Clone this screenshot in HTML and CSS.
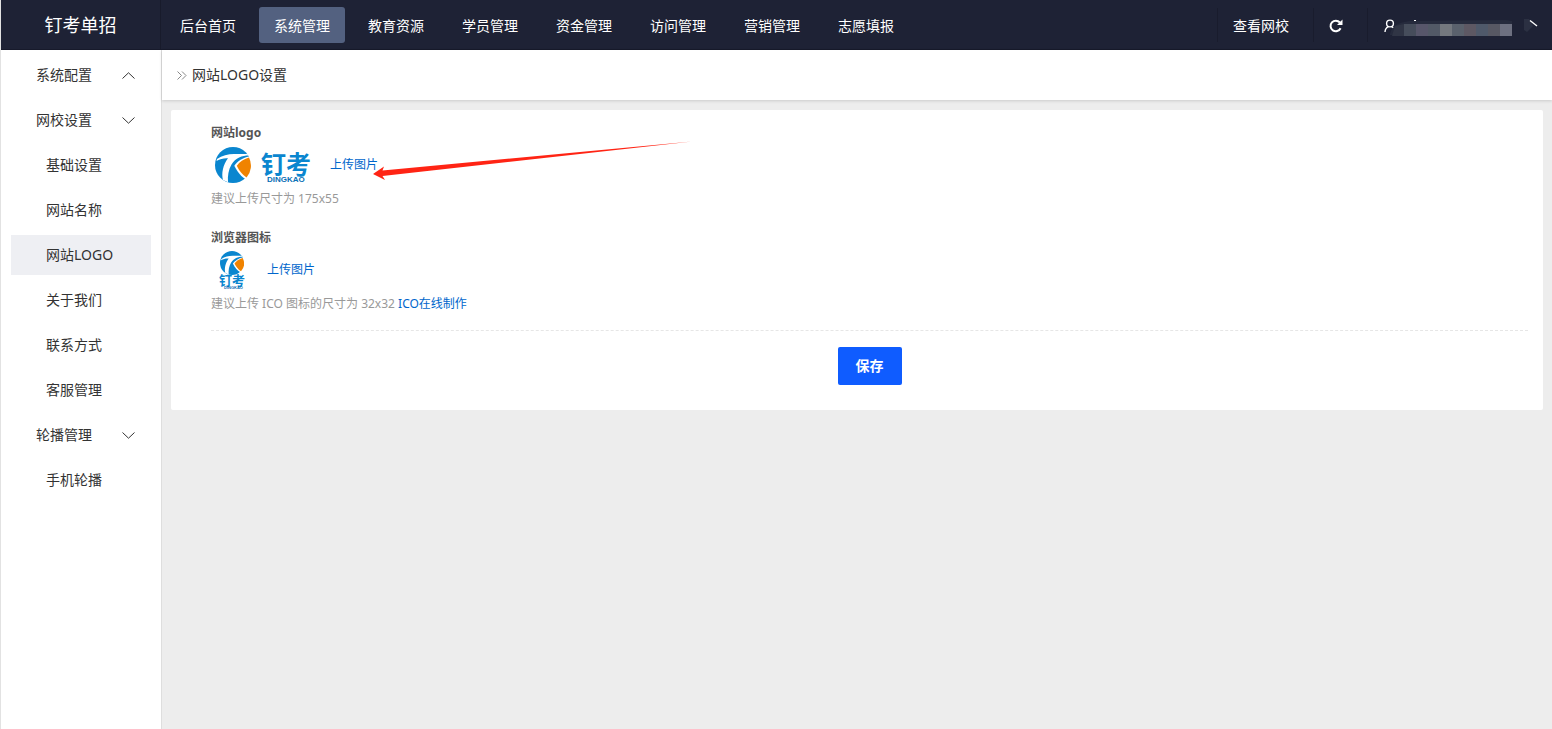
FILE: index.html
```html
<!DOCTYPE html>
<html lang="zh-CN">
<head>
<meta charset="utf-8">
<meta name="viewport" content="width=device-width, initial-scale=1">
<title>网站LOGO设置</title>
<link rel="stylesheet" href="styles.css">
</head>
<body>
<svg width="0" height="0" class="defs" aria-hidden="true">
  <symbol id="mark" viewBox="0 0 36 36">
    <circle cx="18" cy="18" r="18" fill="#0a86cf"/>
    <path d="M2 12C7 8.500 13 7 19 7H32.500L34 8.600C27 8.600 20.500 11 16.500 17.500C13.500 22.500 12.500 29 13 35.300L8 33C6.200 26.500 8 18 13 11.300C9 11 5.500 11.800 1.500 14Z" fill="#fff"/>
    <path d="M34 9.600C28 10.800 22.500 14 19.300 18.800C22 24.500 26 29.500 30.500 32L36 30V9.600Z" fill="#fff"/>
    <path d="M34 10.500C28.500 12 24.500 15 21.800 18.800C24 23.500 27 27.500 31.500 30.500A18 18 0 0 0 34 10.500Z" fill="#f08300"/>
  </symbol>
  <symbol id="chevron" viewBox="0 0 13 7">
    <path d="M0.500 0.500L6.500 6.200L12.500 0.500" fill="none" stroke="currentColor"/>
  </symbol>
</svg>

<header class="topbar">
  <a class="brand" href="#">钉考单招</a>
  <nav class="menu">
    <a href="#">后台首页</a>
    <a class="active" href="#">系统管理</a>
    <a href="#">教育资源</a>
    <a href="#">学员管理</a>
    <a href="#">资金管理</a>
    <a href="#">访问管理</a>
    <a href="#">营销管理</a>
    <a href="#">志愿填报</a>
  </nav>
  <div class="tools">
    <a class="tool" href="#">查看网校</a>
    <button class="tool refresh" type="button" aria-label="刷新">
      <svg width="14" height="14" viewBox="0 0 14 14"><path d="M11.600 9.300A5.300 5.300 0 1 1 10.900 3.500" fill="none" stroke="#fff" stroke-width="2"/><path d="M13.500 0.500V6H8Z" fill="#fff"/></svg>
    </button>
    <button class="tool account" type="button" aria-label="账户">
      <svg width="12" height="14" viewBox="0 0 12 14"><circle cx="6" cy="4.500" r="3.400" fill="none" stroke="#fff" stroke-width="1.400"/><path d="M1 13C1.200 10 2.500 8.300 4.500 7.600M7.500 7.600C9.500 8.300 10.500 9.500 11 11" fill="none" stroke="#fff" stroke-width="1.400"/></svg>
      <svg class="masked" width="134" height="18" viewBox="0 0 134 18">
        <path d="M0 15Q2 4 20 2L116 1L122 2V16H0Z" fill="#262b3d"/>
        <path d="M24 1H26V2H24Z" fill="#fff"/>
        <path d="M5 7L14 5V17H2Z" fill="#303545"/>
        <path d="M14 5H26V17H14Z" fill="#464d5b"/>
        <path d="M26 5H38V17H26Z" fill="#57566a"/>
        <path d="M38 5H50V17H38Z" fill="#525966"/>
        <path d="M50 5H62V17H50Z" fill="#74787e"/>
        <path d="M62 5H74V17H62Z" fill="#5a616c"/>
        <path d="M74 5H86V17H74Z" fill="#5d5863"/>
        <path d="M86 5H98V17H86Z" fill="#4f596a"/>
        <path d="M98 5H110V17H98Z" fill="#575863"/>
        <path d="M110 5H122V17H110Z" fill="#6d7080"/>
      </svg>
      <svg class="caret" width="14" height="14" viewBox="0 0 14 14"><path d="M0 0H5L9 7L3 13L0 11Z" fill="#2b3042"/><path d="M6 1.500L13 7" fill="none" stroke="#fff" stroke-width="1.400"/></svg>
    </button>
  </div>
</header>

<div class="layout">
  <aside class="sidebar">
    <a class="group" href="#">系统配置<svg class="up" width="13" height="7"><use href="#chevron"/></svg></a>
    <a class="group" href="#">网校设置<svg width="13" height="7"><use href="#chevron"/></svg></a>
    <a href="#">基础设置</a>
    <a href="#">网站名称</a>
    <a class="active" href="#">网站LOGO</a>
    <a href="#">关于我们</a>
    <a href="#">联系方式</a>
    <a href="#">客服管理</a>
    <a class="group" href="#">轮播管理<svg width="13" height="7"><use href="#chevron"/></svg></a>
    <a href="#">手机轮播</a>
  </aside>

  <main class="main">
    <h1 class="crumb">
      <svg width="10" height="9" viewBox="0 0 10 9"><path d="M0.500 0.500L4.500 4.500L0.500 8.500M5 0.500L9 4.500L5 8.500" fill="none" stroke="#888"/></svg>
      网站LOGO设置
    </h1>
    <form class="card">
      <section class="field">
        <h2>网站logo</h2>
        <div class="upload">
          <svg width="105" height="40" viewBox="0 0 105 40" role="img" aria-label="钉考 DINGKAO">
            <use href="#mark" x="4" y="2" width="36" height="36"/>
            <text class="logo-cn" x="50" y="29" font-size="25">钉考</text>
            <text class="logo-en" x="56" y="37" font-size="8">DINGKAO</text>
          </svg>
          <a href="#">上传图片</a>
          <svg class="arrow" width="322" height="42" viewBox="0 0 322 42" aria-hidden="true"><path d="M1 33L12 25.500L10.500 29.500L320 0.500L10.500 35L13 39Z" fill="#ff2414"/></svg>
        </div>
        <p>建议上传尺寸为 175x55</p>
      </section>
      <section class="field">
        <h2>浏览器图标</h2>
        <div class="upload">
          <svg width="42" height="40" viewBox="0 0 42 40" role="img" aria-label="钉考">
            <use href="#mark" x="9" y="1" width="24" height="24"/>
            <text class="logo-cn" x="8" y="35" font-size="13">钉考</text>
            <text class="logo-en" x="13" y="39" font-size="4">DINGKAO</text>
          </svg>
          <a href="#">上传图片</a>
        </div>
        <p>建议上传 ICO 图标的尺寸为 32x32 <a href="#">ICO在线制作</a></p>
      </section>
      <div class="actions"><button class="save" type="submit">保存</button></div>
    </form>
  </main>
</div>
</body>
</html>
```
FILE: styles.css
```css
* {
  box-sizing: border-box;
}

body {
  margin: 0;
  min-height: 100vh;
  display: flex;
  flex-direction: column;
  border-left: 1px solid #e2e2e2;
  background: #ededed;
  color: #333;
  font: 14px/20px "Noto Sans", "Noto Sans CJK SC", sans-serif;
}

a {
  color: #0066cc;
  text-decoration: none;
}

h1, h2, p {
  margin: 0;
}

.defs {
  position: absolute;
}

.topbar {
  display: flex;
  height: 50px;
  background: #1e2235;
  border-bottom: 1px solid #171a2b;
}

.brand {
  width: 160px;
  flex: none;
  border-right: 1px solid #181b2b;
  color: #fff;
  font-size: 18px;
  line-height: 50px;
  text-align: center;
}

.menu {
  display: flex;
  align-items: center;
  gap: 8px;
  padding-left: 4px;
}

.menu a {
  height: 36px;
  padding: 0 15px;
  border-radius: 3px;
  color: #fff;
  line-height: 38px;
  white-space: nowrap;
}

.menu .active {
  background: #536180;
}

.tools {
  display: flex;
  align-items: center;
  margin-left: auto;
}

.tool {
  display: flex;
  align-items: center;
  height: 34px;
  padding: 2px 24px 0 15px;
  border: 0;
  border-left: 1px solid #191c2d;
  background: none;
  color: #fff;
  font: inherit;
  white-space: nowrap;
}

.tool svg {
  flex: none;
}

.account {
  padding: 2px 14px 0 16px;
}

.masked {
  margin: 5px 0 0 -6px;
}

.layout {
  display: flex;
  flex: 1;
}

.sidebar {
  width: 161px;
  flex: none;
  display: flex;
  flex-direction: column;
  gap: 5px;
  padding: 5px 10px;
  border-right: 1px solid #dedede;
  background: #fff;
}

.sidebar a {
  display: flex;
  align-items: center;
  height: 40px;
  padding: 0 16px 0 35px;
  color: #333;
}

.sidebar .group {
  justify-content: space-between;
  padding-left: 25px;
}

.sidebar .active {
  background: #eeeff3;
}

.up {
  transform: rotate(180deg);
}

.main {
  flex: 1;
  min-width: 0;
}

.crumb {
  display: flex;
  align-items: center;
  gap: 5px;
  height: 50px;
  padding-left: 15px;
  background: #fff;
  box-shadow: 0 1px 3px rgba(0, 0, 0, 0.15);
  font-size: 14px;
  font-weight: 400;
}

.card {
  margin: 10px 9px;
  padding: 11px 15px 25px 40px;
  border-radius: 2px;
  background: #fff;
  font-size: 12px;
}

.field {
  margin-bottom: 13px;
}

.field:nth-last-of-type(1) {
  margin-bottom: 12px;
}

.field h2 {
  color: #555;
  font-size: 12px;
  font-weight: 700;
  line-height: 24px;
}

.upload {
  position: relative;
  display: flex;
  align-items: center;
  gap: 14px;
  height: 40px;
}

.upload svg {
  overflow: visible;
}

.arrow {
  position: absolute;
  left: 161px;
  top: -4px;
  pointer-events: none;
}

.logo-cn {
  fill: #0a86cf;
  font-family: "Noto Sans CJK SC", sans-serif;
  font-weight: 700;
}

.logo-en {
  fill: #0a6fb5;
  font-family: "Liberation Sans", sans-serif;
  font-weight: 700;
}

.field p {
  color: #999;
  line-height: 28px;
}

.actions {
  display: flex;
  justify-content: center;
  padding-top: 16px;
  border-top: 1px dashed #e6e6e6;
}

.save {
  height: 38px;
  padding: 0 18px;
  border: 0;
  border-radius: 2px;
  background: #0f5cff;
  color: #fff;
  font: inherit;
  font-size: 14px;
  font-weight: 700;
}
```
